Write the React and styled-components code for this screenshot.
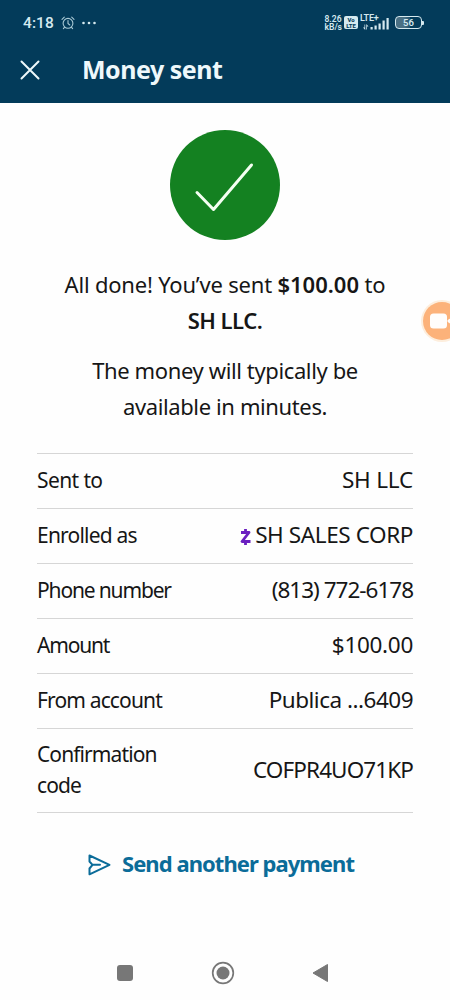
import React from 'react'
import styled, { createGlobalStyle } from 'styled-components'

const GlobalStyle = createGlobalStyle`
  * {
    box-sizing: border-box;
  }
  body {
    margin: 0;
    background: #fefefe;
    font-family: 'Noto Sans', 'Open Sans', sans-serif;
    color: #161616;
  }
`

const Screen = styled.div`
  position: relative;
  display: flex;
  flex-direction: column;
  height: 1000px;
  overflow: hidden;
`

const Header = styled.header`
  height: 103px;
  background: #033b5a;
  color: #eef8fb;
`

const StatusBar = styled.div`
  display: flex;
  justify-content: space-between;
  align-items: center;
  height: 45px;
  padding: 0 26px 0 23px;
  font-family: Roboto, sans-serif;
  color: #d5e9ef;
`

const StatusGroup = styled.div`
  display: flex;
  align-items: center;
  gap: ${props => props.$gap}px;
`

const Clock = styled.span`
  font-size: 15.5px;
  font-weight: 500;
  letter-spacing: 0.1px;
`

const TinyStack = styled.div`
  font-size: 8.5px;
  line-height: 8px;
  font-weight: 600;
`

const VolteBadge = styled.div`
  width: 14px;
  height: 13px;
  padding-top: 1px;
  border-radius: 2px;
  background: #d5e9ef;
  color: #033b5a;
  font-size: 6px;
  line-height: 5.5px;
  font-weight: 800;
  text-align: center;
`

const Signal = styled.div`
  position: relative;
  width: 30px;
  height: 16px;
  svg {
    display: block;
  }
  span {
    position: absolute;
    left: 0;
    top: -1px;
    font-size: 9px;
    line-height: 8px;
    font-weight: 600;
    letter-spacing: -0.2px;
  }
`

const Battery = styled.div`
  display: flex;
  align-items: center;
  margin-left: 3px;
  &::after {
    content: '';
    width: 2px;
    height: 4px;
    background: #d5e9ef;
    border-radius: 0 1px 1px 0;
  }
`

const BatteryBody = styled.div`
  width: 27px;
  height: 13px;
  border: 1.5px solid #d5e9ef;
  border-radius: 4px;
  background: linear-gradient(90deg, #4a7084 35%, #1f506b 56%, transparent 56%);
  font-size: 9.5px;
  line-height: 11.5px;
  font-weight: 600;
  text-align: center;
`

const TitleBar = styled.div`
  display: flex;
  align-items: center;
  height: 50px;
  padding-left: 20px;
  gap: 42px;
`

const Title = styled.h1`
  margin: 0;
  padding-bottom: 2px;
  font-size: 25px;
  line-height: 34px;
  font-weight: 700;
  letter-spacing: -0.5px;
`

const Main = styled.main`
  flex: 1;
  display: flex;
  flex-direction: column;
  align-items: center;
  padding: 27px 37px 0;
`

const Badge = styled.div`
  display: flex;
  align-items: center;
  justify-content: center;
  width: 110px;
  height: 110px;
  margin-right: 1px;
  border-radius: 50%;
  background: #148121;
`

const Message = styled.p`
  margin: ${props => props.$top}px 0 0;
  font-size: 22px;
  line-height: 36px;
  text-align: center;
  letter-spacing: ${props => props.$spacing}px;
  white-space: nowrap;
`

const Strong = styled.b`
  font-weight: 600;
  letter-spacing: ${props => props.$spacing}px;
`

const Details = styled.dl`
  width: 100%;
  margin: 29px 0 0;
  border-top: 1px solid #d6d6d6;
`

const Row = styled.div`
  display: flex;
  justify-content: space-between;
  align-items: center;
  height: ${props => props.$height || 55}px;
  padding-bottom: 2px;
  border-bottom: 1px solid #d6d6d6;
`

const Label = styled.dt`
  width: 150px;
  font-size: 21px;
  line-height: 31px;
  letter-spacing: ${props => props.$spacing}px;
`

const Value = styled.dd`
  display: flex;
  align-items: center;
  gap: 4px;
  margin: 0;
  font-size: 22.5px;
  line-height: 32px;
  letter-spacing: ${props => props.$spacing}px;
  white-space: nowrap;
  svg {
    margin-top: 3px;
  }
`

const SendAnother = styled.button`
  display: flex;
  align-items: center;
  gap: 11px;
  margin: 33px 8px 0 0;
  padding: 0;
  border: 0;
  background: none;
  color: #0b6c99;
  font: 700 22px/34px 'Noto Sans', sans-serif;
  letter-spacing: -0.95px;
  white-space: nowrap;
  svg {
    margin-top: 3px;
  }
`

const NavBar = styled.nav`
  display: flex;
  justify-content: space-between;
  align-items: center;
  height: 54px;
  padding: 0 121px 0 116px;
`

// floating screen recorder bubble, half off the right edge
const Recorder = styled.div`
  position: absolute;
  left: 423px;
  top: 302px;
  width: 38px;
  height: 38px;
  border-radius: 50%;
  background: #fcb27a;
  box-shadow: 0 0 0 2px #fdeedd;
`

const rows = [
  { label: 'Sent to', value: 'SH LLC', ls: -0.6, vs: -0.2 },
  { label: 'Enrolled as', value: 'SH SALES CORP', ls: -0.8, vs: -0.4, zelle: true },
  { label: 'Phone number', value: '(813) 772-6178', ls: -1.15, vs: -1 },
  { label: 'Amount', value: '$100.00', ls: -1.2, vs: -0.3 },
  { label: 'From account', value: 'Publica ...6409', ls: -0.85, vs: -0.5 },
  { label: 'Confirmation code', value: 'COFPR4UO71KP', ls: -0.9, vs: -0.9, height: 84 }
]

const AlarmIcon = () => (
  <svg width="14" height="14" viewBox="0 0 14 14" fill="none" stroke="#a9c9d5" strokeWidth="1.1" strokeLinecap="round">
    <circle cx="7" cy="7.3" r="4.9" />
    <path d="M7 4.6v2.9l1.8 1.5M1 3.4L3.3 1.2M13 3.4l-2.3-2.2M3.4 11.3l-1 1.3M10.6 11.3l1 1.3" />
  </svg>
)

const DotsIcon = () => (
  <svg width="14" height="4" viewBox="0 0 14 4" fill="#d5e9ef">
    <circle cx="1.5" cy="2" r="1.3" />
    <circle cx="7" cy="2" r="1.3" />
    <circle cx="12.5" cy="2" r="1.3" />
  </svg>
)

const SignalIcon = () => (
  <svg width="30" height="16" viewBox="0 0 30 16" fill="#d5e9ef">
    <path d="M4.5 9.500v3H3l2.200 2.500V9.500zM7 14.500v-3h1.500L6.300 9v5.500z" />
    <rect x="10.5" y="12" width="2.2" height="2.5" />
    <rect x="14.500" y="10.500" width="2.200" height="4" />
    <rect x="18.500" y="8.500" width="2.200" height="6" />
    <rect x="22.500" y="5.500" width="2.200" height="9" />
    <rect x="26.500" y="3" width="2.200" height="11.500" />
  </svg>
)

const CloseIcon = () => (
  <svg width="20" height="20" viewBox="0 0 20 20" fill="none" stroke="#eef8fb" strokeWidth="2" strokeLinecap="round">
    <path d="M1.500 1.500l17 17M18.500 1.500l-17 17" />
  </svg>
)

const CheckIcon = () => (
  <svg width="110" height="110" viewBox="0 0 110 110" fill="none" stroke="#f4fff2" strokeWidth="3" strokeLinecap="round" strokeLinejoin="round">
    <path d="M27 62.500l16.500 17L81.500 35" />
  </svg>
)

const ZelleIcon = () => (
  <svg width="11" height="18" viewBox="0 0 11 18" fill="none" stroke="#6a1fc0" strokeWidth="2.8">
    <path d="M1 4.500h8L2 13.500h8.500M5.500 1v3M5.500 14v3" strokeLinejoin="round" />
  </svg>
)

const SendIcon = () => (
  <svg width="23" height="22" viewBox="0 0 23 22" fill="none" stroke="#0b6c99" strokeWidth="2" strokeLinejoin="round" strokeLinecap="round">
    <path d="M1.500 1.500L21.500 10.800L1.500 20.300V14.500L4.500 10.800L1.500 7.500zM4.500 10.800H12" />
  </svg>
)

const CameraIcon = () => (
  <svg width="38" height="38" viewBox="0 0 38 38" fill="#fffdfb">
    <rect x="7" y="11.500" width="17" height="15" rx="3.500" />
    <path d="M26 19l6-4.500v9z" stroke="#fffdfb" strokeWidth="3" strokeLinejoin="round" />
  </svg>
)

const App = () => (
  <Screen>
    <GlobalStyle />
    <Header>
      <StatusBar>
        <StatusGroup $gap={7}>
          <Clock>4:18</Clock>
          <AlarmIcon />
          <DotsIcon />
        </StatusGroup>
        <StatusGroup $gap={2}>
          <TinyStack>8.26<br />kB/s</TinyStack>
          <VolteBadge>Vo<br />LTE</VolteBadge>
          <Signal>
            <SignalIcon />
            <span>LTE+</span>
          </Signal>
          <Battery>
            <BatteryBody>56</BatteryBody>
          </Battery>
        </StatusGroup>
      </StatusBar>
      <TitleBar>
        <CloseIcon />
        <Title>Money sent</Title>
      </TitleBar>
    </Header>
    <Main>
      <Badge>
        <CheckIcon />
      </Badge>
      <Message $top={26} $spacing={-0.2}>
        All done! You’ve sent <Strong $spacing={0}>$100.00</Strong> to<br />
        <Strong $spacing={-0.5}>SH LLC.</Strong>
      </Message>
      <Message $top={14} $spacing={-0.38}>
        The money will typically be<br />
        available in minutes.
      </Message>
      <Details>
        {rows.map(row => (
          <Row key={row.label} $height={row.height}>
            <Label $spacing={row.ls}>{row.label}</Label>
            <Value $spacing={row.vs}>
              {row.zelle && <ZelleIcon />}
              {row.value}
            </Value>
          </Row>
        ))}
      </Details>
      <SendAnother>
        <SendIcon />
        Send another payment
      </SendAnother>
    </Main>
    <NavBar>
      <svg width="18" height="18">
        <rect x="1" y="1" width="16" height="16" rx="3" fill="#777" />
      </svg>
      <svg width="24" height="24" fill="none">
        <circle cx="12" cy="12" r="10.300" stroke="#777" strokeWidth="1.700" />
        <circle cx="12" cy="12" r="6.500" fill="#777" />
      </svg>
      <svg width="17" height="20" fill="#777">
        <path d="M1 10L15.500 1.500v17z" stroke="#777" strokeLinejoin="round" />
      </svg>
    </NavBar>
    <Recorder>
      <CameraIcon />
    </Recorder>
  </Screen>
)

export default App
